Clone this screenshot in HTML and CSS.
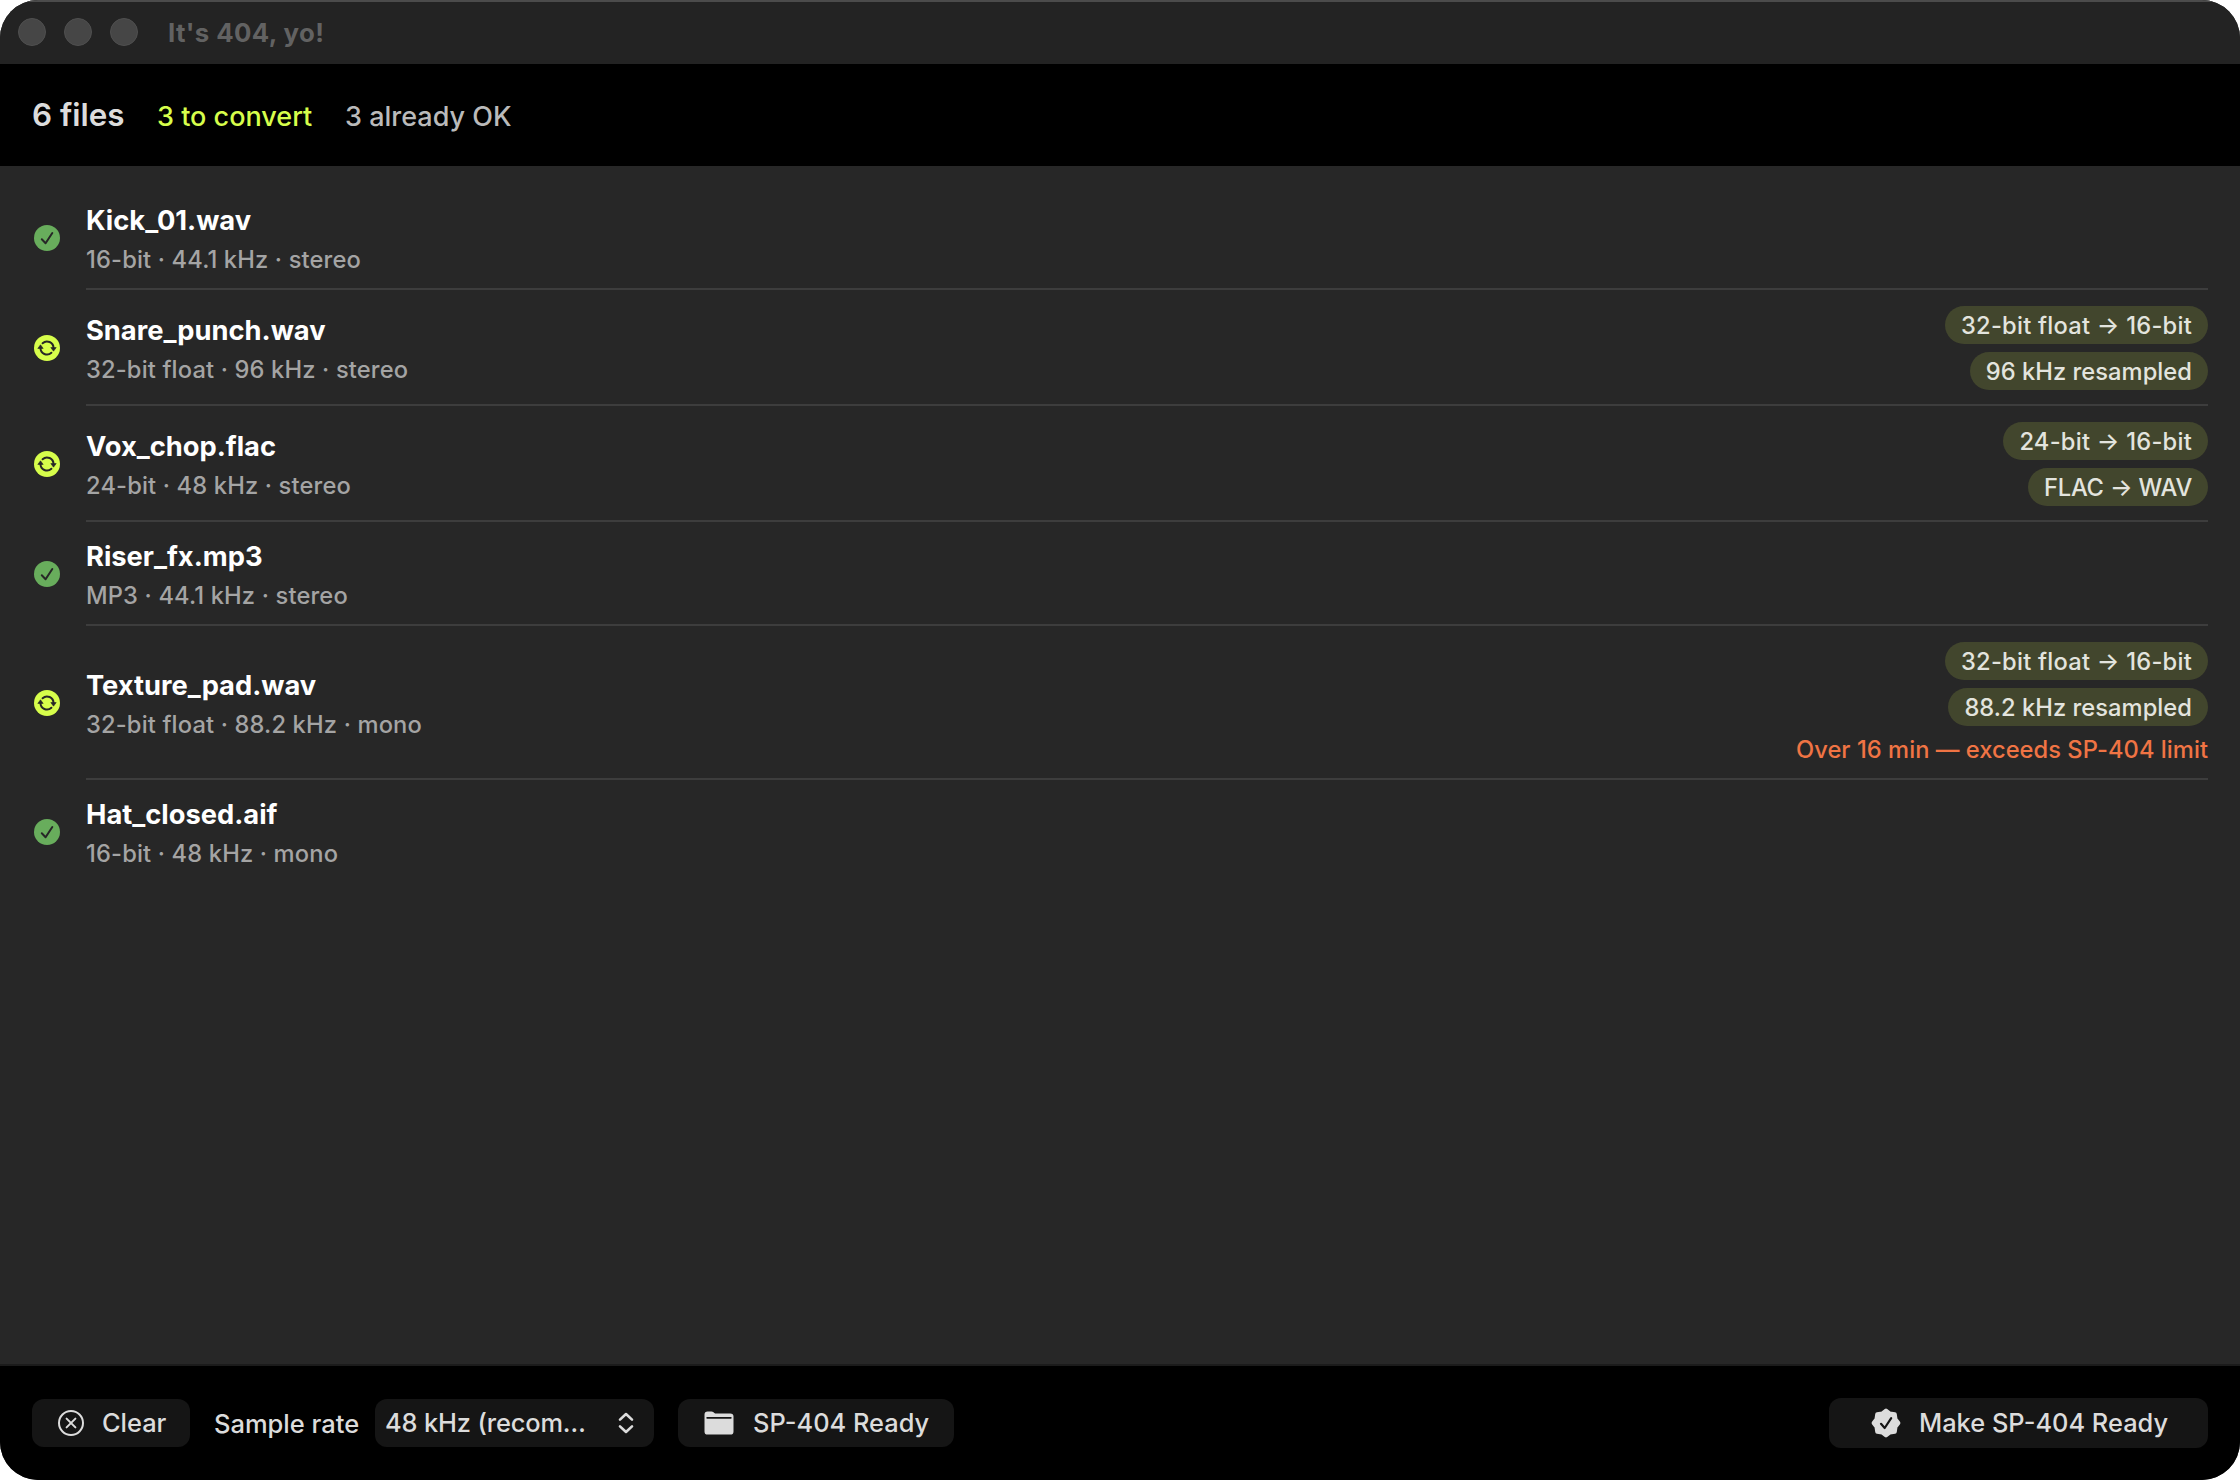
FILE: index.html
```html
<!DOCTYPE html>
<html lang="en">
<head>
	<meta charset="UTF-8">
	<title>It's 404, yo!</title>
	<link rel="stylesheet" href="styles.css">
</head>
<body>

<!-- shared icons -->
	<svg class="sprite" width="0" height="0">
		<symbol id="icon-ok" viewBox="0 0 26 26">
			<circle cx="13" cy="13" r="13" fill="#68ad5c"/>
			<path d="M7.8 14.2 L11.6 18.2 L18.3 8" fill="none" stroke="#272727" stroke-width="2" stroke-linecap="round" stroke-linejoin="round"/>
		</symbol>
		<symbol id="icon-convert" viewBox="0 0 26 26">
			<circle cx="13" cy="13" r="13" fill="#d7fe4b"/>
			<path d="M8.6 8.2 A6.5 6.5 0 0 1 19.5 13 M17.4 17.8 A6.5 6.5 0 0 1 6.5 13" fill="none" stroke="#272727" stroke-width="2" stroke-linecap="round"/>
			<path d="M16.8 12.6 H22.2 L19.5 16.2 Z M3.8 13.4 H9.2 L6.5 9.8 Z" fill="#272727" stroke="#272727" stroke-width=".6" stroke-linejoin="round"/>
		</symbol>
	</svg>

	<div class="window">

		<div class="titlebar">
			<span class="light"></span>
			<span class="light"></span>
			<span class="light"></span>
			<span class="title">It's 404, yo!</span>
		</div>

		<div class="summary">
			<span class="total">6 files</span>
			<span class="to-convert">3 to convert</span>
			<span class="already-ok">3 already OK</span>
		</div>

		<!-- file list -->
		<div class="list">

			<div class="row">
				<svg class="status"><use href="#icon-ok"/></svg>
				<div class="row-body">
					<div class="file">
						<div class="name">Kick_01.wav</div>
						<div class="info">16-bit · 44.1 kHz · stereo</div>
					</div>
				</div>
			</div>

			<div class="row">
				<svg class="status"><use href="#icon-convert"/></svg>
				<div class="row-body">
					<div class="file">
						<div class="name">Snare_punch.wav</div>
						<div class="info">32-bit float · 96 kHz · stereo</div>
					</div>
					<div class="changes">
						<span class="pill pill-depth">32-bit float → 16-bit</span>
						<span class="pill">96 kHz resampled</span>
					</div>
				</div>
			</div>

			<div class="row">
				<svg class="status"><use href="#icon-convert"/></svg>
				<div class="row-body">
					<div class="file">
						<div class="name">Vox_chop.flac</div>
						<div class="info">24-bit · 48 kHz · stereo</div>
					</div>
					<div class="changes">
						<span class="pill pill-depth">24-bit → 16-bit</span>
						<span class="pill pill-format">FLAC → WAV</span>
					</div>
				</div>
			</div>

			<div class="row">
				<svg class="status"><use href="#icon-ok"/></svg>
				<div class="row-body">
					<div class="file">
						<div class="name">Riser_fx.mp3</div>
						<div class="info">MP3 · 44.1 kHz · stereo</div>
					</div>
				</div>
			</div>

			<div class="row">
				<svg class="status"><use href="#icon-convert"/></svg>
				<div class="row-body">
					<div class="file">
						<div class="name">Texture_pad.wav</div>
						<div class="info">32-bit float · 88.2 kHz · mono</div>
					</div>
					<div class="changes">
						<span class="pill pill-depth">32-bit float → 16-bit</span>
						<span class="pill">88.2 kHz resampled</span>
						<span class="warning">Over 16 min — exceeds SP-404 limit</span>
					</div>
				</div>
			</div>

			<div class="row">
				<svg class="status"><use href="#icon-ok"/></svg>
				<div class="row-body">
					<div class="file">
						<div class="name">Hat_closed.aif</div>
						<div class="info">16-bit · 48 kHz · mono</div>
					</div>
				</div>
			</div>

		</div>

		<div class="footer">
			<button class="btn btn-clear">
				<svg width="26" height="26" viewBox="0 0 26 26" fill="none" stroke="#dcdcdc" stroke-width="2" stroke-linecap="round">
					<circle cx="13" cy="13" r="12"/>
					<path d="M8.6 8.6 L17.4 17.4 M17.4 8.6 L8.6 17.4"/>
				</svg>
				<span>Clear</span>
			</button>

			<span class="label">Sample rate</span>

			<button class="btn btn-select">
				<span>48 kHz (recom…</span>
				<svg width="16" height="22" viewBox="0 0 16 22" fill="none" stroke="#dcdcdc" stroke-width="2.6" stroke-linecap="round" stroke-linejoin="round">
					<path d="M2 7.6 L8 2 L14 7.6 M2 14.4 L8 20 L14 14.4"/>
				</svg>
			</button>

			<button class="btn btn-folder">
				<svg width="30" height="24" viewBox="0 0 30 24" fill="#dcdcdc">
					<path d="M0.5 5.4 V3.6 Q0.5 0.4 3.7 0.4 H7.4 Q8.6 0.4 9.5 1.2 L10.4 1.9 Q11 2.4 12 2.4 H26.2 Q29.5 2.4 29.5 5.6 V20.4 Q29.5 23.6 26.2 23.6 H3.8 Q0.5 23.6 0.5 20.4 Z"/>
					<path d="M3.2 6.8 H26.8" stroke="#151515" stroke-width="1.8" stroke-linecap="round"/>
				</svg>
				<span>SP-404 Ready</span>
			</button>

			<button class="btn btn-make">
				<svg width="30" height="30" viewBox="0 0 30 30">
					<path d="M15 2.6 L18.9 5.5 L23.8 6.2 L24.5 11.1 L27.4 15 L24.5 18.9 L23.8 23.8 L18.9 24.5 L15 27.4 L11.1 24.5 L6.2 23.8 L5.5 18.9 L2.6 15 L5.5 11.1 L6.2 6.2 L11.1 5.5 Z" fill="#dcdcdc" stroke="#dcdcdc" stroke-width="4" stroke-linejoin="round"/>
					<path d="M10 15.8 L13.7 20 L20.2 10.2" fill="none" stroke="#151515" stroke-width="2.2" stroke-linecap="round" stroke-linejoin="round"/>
				</svg>
				<span>Make SP-404 Ready</span>
			</button>
		</div>

	</div>

</body>
</html>
```
FILE: styles.css
```css
* {
	box-sizing: border-box;
}

body {
	margin: 0;
	background: #ffffff;
	font-family: Inter, "Liberation Sans", sans-serif;
}

.sprite {
	display: block;
}

.window {
	display: flex;
	flex-direction: column;
	width: 2240px;
	height: 1480px;
	background: #272727;
	border-radius: 38px;
	overflow: hidden;
}

/* title bar */
.titlebar {
	display: flex;
	align-items: center;
	gap: 18px;
	height: 64px;
	padding-left: 18px;
	background: #232323;
	box-shadow: inset 0 2px 0 #4b4b4b;
}

.light {
	width: 28px;
	height: 28px;
	border-radius: 50%;
	background: #464646;
	border: 1px solid #505050;
}

.title {
	margin-left: 12px;
	font-size: 25.8px;
	font-weight: 700;
	letter-spacing: .4px;
	color: #626262;
}

/* summary */
.summary {
	display: flex;
	align-items: baseline;
	height: 102px;
	padding: 0 32px;
	background: #000000;
	line-height: 102px;
	white-space: nowrap;
}

.total {
	width: 125px;
	font-size: 31.4px;
	font-weight: 600;
	color: #dcdcdc;
}

.to-convert {
	width: 188px;
	font-size: 27px;
	font-weight: 500;
	color: #d7fe4b;
}

.already-ok {
	font-size: 27px;
	font-weight: 450;
	color: #bababa;
}

/* file list */
.list {
	flex: 1;
	padding: 20px 32px 0;
}

.row {
	display: flex;
	align-items: center;
	gap: 26px;
	padding-left: 2px;
}

.status {
	width: 26px;
	height: 26px;
}

.row-body {
	flex: 1;
	display: flex;
	align-items: center;
	justify-content: space-between;
	padding: 16px 0;
	box-shadow: inset 0 -2px 0 #3d3d3d;
}

.row:last-child .row-body {
	box-shadow: none;
}

.name {
	font-size: 27.3px;
	font-weight: 700;
	line-height: 38px;
	color: #ffffff;
}

.info {
	margin-top: 4px;
	padding-top: 1px;
	font-size: 23.7px;
	font-weight: 450;
	line-height: 29px;
	letter-spacing: .15px;
	color: #a4a4a4;
}

.changes {
	display: flex;
	flex-direction: column;
	align-items: flex-end;
	gap: 8px;
}

.pill {
	height: 38px;
	padding: 1px 16px 0;
	border-radius: 19px;
	background: #42462d;
	font-size: 23.7px;
	font-weight: 500;
	letter-spacing: .04px;
	line-height: 38px;
	color: #e3e4de;
}

.pill-depth {
	letter-spacing: .24px;
}

.pill-format {
	letter-spacing: -.2px;
}

.warning {
	height: 30px;
	font-size: 23.7px;
	font-weight: 450;
	line-height: 32px;
	letter-spacing: .03px;
	color: #f07444;
}

/* footer */
.footer {
	display: flex;
	align-items: center;
	height: 116px;
	padding: 0 32px;
	background: #000000;
	border-top: 2px solid #1b1b1b;
	color: #dcdcdc;
	font-size: 25.5px;
	font-weight: 450;
}

.btn {
	display: flex;
	align-items: center;
	height: 48px;
	padding: 0;
	border: none;
	border-radius: 12px;
	background: #151515;
	color: #dcdcdc;
	font: 500 25.4px/50px Inter, "Liberation Sans", sans-serif;
	white-space: nowrap;
}

.btn-clear {
	width: 158px;
	padding-left: 26px;
	gap: 18px;
}

.label {
	width: 161px;
	margin-left: 24px;
}

.btn-select {
	width: 279px;
	padding: 0 20px 0 10px;
	justify-content: space-between;
	letter-spacing: -.15px;
}

.btn-folder {
	width: 276px;
	margin-left: 24px;
	padding-left: 26px;
	gap: 19px;
}

.btn-make {
	width: 379px;
	height: 50px;
	margin-left: auto;
	padding-left: 42px;
	gap: 18px;
}
```
